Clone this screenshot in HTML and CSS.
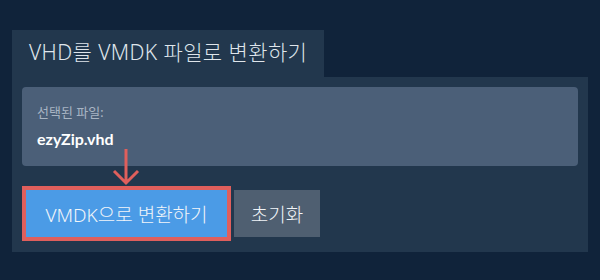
FILE: index.html
```html
<!DOCTYPE html>
<html lang="ko">
<head>
    <meta charset="UTF-8">
    <meta name="viewport" content="width=device-width, initial-scale=1.0">
    <title>VHD를 VMDK 파일로 변환하기</title>
    <link rel="stylesheet" href="styles.css">
</head>
<body>
    <div class="converter">
        <div class="tabs">
            <div class="tab">VHD를 VMDK 파일로 변환하기</div>
        </div>
        <div class="panel">
            <div class="file-box">
                <p class="file-label">선택된 파일:</p>
                <p class="file-name">ezyZip.vhd</p>
            </div>
            <div class="actions">
                <button class="convert">VMDK으로 변환하기</button>
                <button class="reset">초기화</button>
            </div>
            <svg class="hint-arrow" width="30" height="38" viewBox="0 0 30 38">
                <path d="M15 1 V35 M3 23 L15 35 L27 23" fill="none" stroke="#e05f5c" stroke-width="3"/>
            </svg>
        </div>
    </div>
</body>
</html>
```
FILE: styles.css
```css
body {
    margin: 0;
    background-color: #10233a;
    font-family: "Noto Sans", "Noto Sans CJK KR", sans-serif;
    height: 280px;
}
.converter {
    padding: 30px 12px 0 12px;
}
.tabs {
    display: flex;
}
.tab {
    background: #22374d;
    color: #dfe5eb;
    font-size: 21px;
    font-weight: 300;
    letter-spacing: 0.4px;
    height: 47px;
    line-height: 45px;
    width: 295px;
    padding-left: 17px;
    white-space: nowrap;
}
.panel {
    position: relative;
    background: #22374d;
    padding: 10px 10px 11px 10px;
}
.file-box {
    background: #4b5f78;
    border-radius: 4px;
    padding: 15px 15px 0 15px;
    height: 64px;
}
.file-label {
    margin: 0;
    font-family: Lato, "Noto Sans CJK KR", sans-serif;
    font-size: 13px;
    color: #a8b4c3;
    line-height: 20px;
}
.file-name {
    margin: 7px 0 0 0;
    font-family: Lato, "Noto Sans CJK KR", sans-serif;
    font-weight: bold;
    font-size: 16px;
    color: #ffffff;
    line-height: 20px;
}
.actions {
    display: flex;
    align-items: center;
    gap: 3px;
    margin-top: 20px;
}
.actions button {
    font-family: "Noto Sans", "Noto Sans CJK KR", sans-serif;
    font-size: 19px;
    font-weight: 300;
    color: #f1f5f9;
    border: none;
    padding: 0;
    cursor: pointer;
    white-space: nowrap;
}
.convert {
    background: #4b9be6;
    border: 4px solid #e05f5c !important;
    width: 209px;
    height: 55px;
}
.reset {
    background: #4f5f71;
    width: 86px;
    height: 47px;
}
.hint-arrow {
    position: absolute;
    left: 99px;
    top: 71px;
}
```
